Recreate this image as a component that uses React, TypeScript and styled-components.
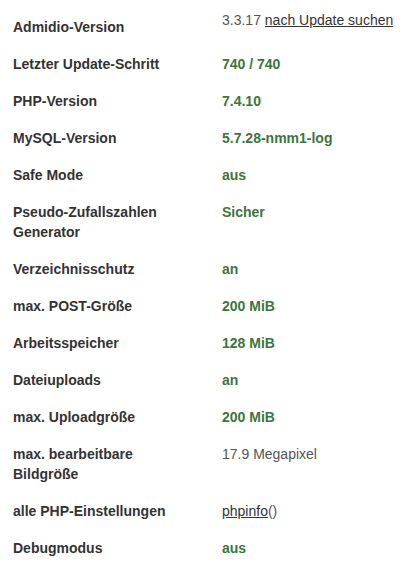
import React from "react";
import styled, { createGlobalStyle } from "styled-components";

const Global = createGlobalStyle`
  html, body { margin: 0; padding: 0; background: #fff; }
  body { font-family: "Liberation Sans", Arial, sans-serif; font-size: 14px; color: #333; }
`;

const Table = styled.div`
  display: flex;
  flex-direction: column;
  padding-top: 9px;
`;

const Row = styled.div`
  display: grid;
  grid-template-columns: 222px 1fr;
  padding: 8px 0 9px;
  line-height: 20px;
`;

const Label = styled.div`
  padding: 0 28px 0 13px;
  font-weight: bold;
  color: #333;
`;

type Tone = "ok" | "plain";

const Value = styled.div<{ $tone: Tone; $raised?: boolean }>`
  font-weight: ${(p) => (p.$tone === "ok" ? "bold" : "normal")};
  color: ${(p) => (p.$tone === "ok" ? "#3c763d" : "#555")};
  margin-top: ${(p) => (p.$raised ? "-7px" : "0")};
`;

const Link = styled.a`
  color: #333;
  text-decoration: underline;
`;

type Item = { label: string; value: React.ReactNode; tone: Tone; raised?: boolean };

const items: Item[] = [
  {
    label: "Admidio-Version",
    value: (
      <>
        3.3.17 <Link href="#">nach Update suchen</Link>
      </>
    ),
    tone: "plain",
    raised: true,
  },
  { label: "Letzter Update-Schritt", value: "740 / 740", tone: "ok" },
  { label: "PHP-Version", value: "7.4.10", tone: "ok" },
  { label: "MySQL-Version", value: "5.7.28-nmm1-log", tone: "ok" },
  { label: "Safe Mode", value: "aus", tone: "ok" },
  { label: "Pseudo-Zufallszahlen Generator", value: "Sicher", tone: "ok" },
  { label: "Verzeichnisschutz", value: "an", tone: "ok" },
  { label: "max. POST-Größe", value: "200 MiB", tone: "ok" },
  { label: "Arbeitsspeicher", value: "128 MiB", tone: "ok" },
  { label: "Dateiuploads", value: "an", tone: "ok" },
  { label: "max. Uploadgröße", value: "200 MiB", tone: "ok" },
  { label: "max. bearbeitbare Bildgröße", value: "17.9 Megapixel", tone: "plain" },
  {
    label: "alle PHP-Einstellungen",
    value: (
      <>
        <Link href="#">phpinfo</Link>()
      </>
    ),
    tone: "plain",
  },
  { label: "Debugmodus", value: "aus", tone: "ok" },
];

export default function App() {
  return (
    <>
      <Global />
      <Table>
        {items.map((it) => (
          <Row key={it.label}>
            <Label>{it.label}</Label>
            <Value $tone={it.tone} $raised={it.raised}>
              {it.value}
            </Value>
          </Row>
        ))}
      </Table>
    </>
  );
}
